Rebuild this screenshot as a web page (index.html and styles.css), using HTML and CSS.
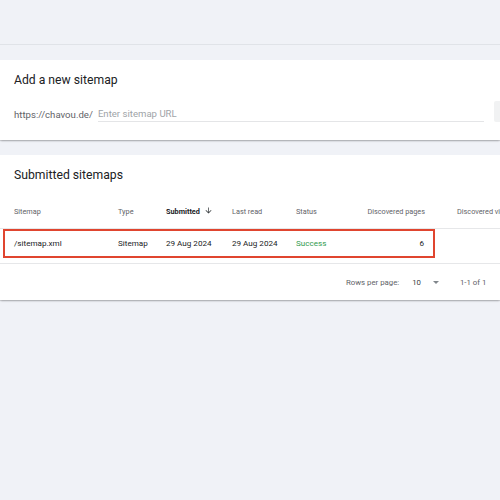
FILE: index.html
```html
<!DOCTYPE html>
<html>
<head>
<meta charset="utf-8">
<link rel="stylesheet" href="styles.css">
</head>
<body>
<div class="topbar"></div>
<section class="card add-card">
  <h2 class="card-title">Add a new sitemap</h2>
  <div class="add-row">
    <span class="prefix">https://chavou.de/</span>
    <span class="url-input">Enter sitemap URL</span>
    <span class="submit-btn"></span>
  </div>
</section>
<section class="card list-card">
  <h2 class="card-title">Submitted sitemaps</h2>
  <div class="table">
    <div class="row head">
      <span>Sitemap</span>
      <span>Type</span>
      <span class="sorted">Submitted <svg class="sort-icon" viewBox="0 0 24 24" width="9" height="9"><path d="M20 12l-1.41-1.41L13 16.17V4h-2v12.17l-5.58-5.59L4 12l8 8 8-8z" fill="#3c4043"/></svg></span>
      <span>Last read</span>
      <span>Status</span>
      <span class="num">Discovered pages</span>
      <span>Discovered videos</span>
    </div>
    <div class="row body-row">
      <span>/sitemap.xml</span>
      <span>Sitemap</span>
      <span>29 Aug 2024</span>
      <span>29 Aug 2024</span>
      <span class="success">Success</span>
      <span class="num">6</span>
      <span></span>
      <div class="highlight"></div>
    </div>
  </div>
  <div class="pager">
    <span class="pager-label">Rows per page:</span>
    <span class="pager-size">10</span>
    <span class="caret"></span>
    <span class="pager-range">1-1 of 1</span>
  </div>
</section>
</body>
</html>
```
FILE: styles.css
```css
html, body {
  margin: 0;
  padding: 0;
}
body {
  background: #f0f2f7;
  font-family: Roboto, "Liberation Sans", Arial, sans-serif;
  color: #3c4043;
  width: 500px;
  height: 500px;
  overflow: hidden;
}
.topbar {
  height: 44px;
  border-bottom: 1px solid #e0e3e8;
}
.card {
  background: #fff;
  box-shadow: 0 1px 1px rgba(0,0,0,0.14), 0 2px 2px -1px rgba(0,0,0,0.18);
  width: 500px;
  overflow: hidden;
}
.add-card {
  margin-top: 15px;
  height: 80px;
  box-sizing: border-box;
  padding: 12px 0 0 14px;
}
.card-title {
  margin: 0;
  font-size: 12.2px;
  font-weight: 400;
  color: #202124;
  line-height: 16px;
}
.add-row {
  display: flex;
  align-items: flex-end;
  margin-top: 17px;
}
.add-row > * {
  flex-shrink: 0;
}
.prefix {
  font-size: 9.6px;
  color: #5f6368;
  line-height: 12px;
  padding-bottom: 1px;
}
.url-input {
  margin-left: 5px;
  width: 386px;
  font-size: 9.6px;
  color: #a0a4a8;
  line-height: 12px;
  padding-bottom: 1px;
  border-bottom: 1px solid #e4e5e7;
}
.submit-btn {
  margin-left: 10px;
  width: 20px;
  height: 21px;
  background: #f1f2f3;
  border-radius: 2px;
  align-self: center;
  margin-top: -4px;
}
.list-card {
  margin-top: 15px;
  height: 145px;
  box-sizing: border-box;
  padding-top: 12px;
}
.list-card .card-title {
  padding-left: 14px;
}
.table {
  margin-top: 10px;
}
.row {
  display: grid;
  grid-template-columns: 104px 48px 66px 64px 56px 73px 120px;
  padding-left: 14px;
  align-items: center;
  white-space: nowrap;
  position: relative;
}
.row.head {
  height: 36px;
  box-sizing: border-box;
  font-size: 7.3px;
  color: #5f6368;
  border-bottom: 1px solid #e6e7e9;
  padding-top: 1px;
}
.row.head span:last-child {
  padding-left: 32px;
}
.sorted {
  font-weight: 700;
  color: #202124;
  display: flex;
  align-items: center;
}
.sort-icon {
  margin-left: 4px;
  margin-top: -2px;
}
.num {
  text-align: right;
}
.body-row {
  height: 35px;
  box-sizing: border-box;
  padding-bottom: 6px;
  font-size: 8.1px;
  color: #202124;
  border-bottom: 1px solid #e6e7e9;
}
.body-row .num {
  padding-right: 1px;
}
.success {
  color: #2f9a4e;
}
.highlight {
  position: absolute;
  left: 3px;
  top: 0px;
  width: 432px;
  height: 29px;
  box-sizing: border-box;
  border: 2.5px solid #e0452f;
}
.pager {
  display: flex;
  align-items: center;
  height: 36px;
  font-size: 7.8px;
  color: #5f6368;
  padding-left: 346px;
}
.pager-size {
  margin-left: 13px;
  color: #3c4043;
}
.caret {
  margin-left: 12px;
  width: 0;
  height: 0;
  border-left: 3.5px solid transparent;
  border-right: 3.5px solid transparent;
  border-top: 3.5px solid #80868b;
}
.pager-range {
  margin-left: 21px;
}
```
